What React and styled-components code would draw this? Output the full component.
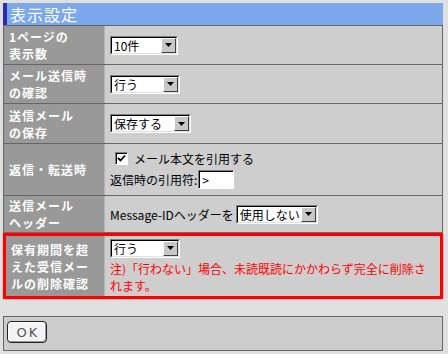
import React from 'react';
import styled, { createGlobalStyle } from 'styled-components';

const GlobalStyle = createGlobalStyle`
  html, body {
    margin: 0;
    padding: 0;
    background: #e0e0e0;
  }
  body {
    font-family: "Noto Sans CJK JP", "DejaVu Sans", sans-serif;
    font-size: 12px;
    color: #000;
  }
  * { box-sizing: border-box; }
`;

const Page = styled.div`
  width: 446px;
  padding: 3px;
`;

const Title = styled.div`
  height: 22px;
  background: #7ba7eb;
  border-left: 4px solid #2b2bb8;
  color: #fff;
  font-size: 16px;
  line-height: 22px;
  letter-spacing: 1px;
  padding-left: 3px;
`;

const Row = styled.div`
  display: grid;
  grid-template-columns: ${p => (p.$alert ? '98px' : '100px')} 1fr;
  height: ${p => p.$h}px;
  border: 1px solid #666;
  border-top-width: ${p => (p.$first ? 1 : 0)}px;
  ${p => p.$alert && `
    border: 3px solid #ff0000;
    box-shadow: 0 0 1px #ff6060;
  `}
`;

const Label = styled.div`
  background: #999;
  color: #fff;
  font-weight: bold;
  font-size: 12px;
  line-height: 17px;
  letter-spacing: 1px;
  padding: 0 4px 0 5px;
  display: flex;
  align-items: center;
`;

const Value = styled.div`
  background: #cecece;
  border-left: 1px solid #b4b4b4;
  padding: 0 4px 0 5px;
  display: flex;
  flex-direction: column;
  justify-content: center;
  align-items: flex-start;
  gap: ${p => p.$gap || 0}px;
`;

const Line = styled.div`
  display: flex;
  align-items: center;
  white-space: nowrap;
`;

const SelectBox = styled.span`
  display: inline-flex;
  width: ${p => p.$w}px;
  height: 19px;
  border: 1px solid;
  border-color: #808080 #fff #fff #808080;
  margin-left: ${p => p.$ml || 0}px;
`;

const SelectInner = styled.span`
  flex: 1;
  display: flex;
  border: 1px solid;
  border-color: #000 #dfdfdf #dfdfdf #000;
  background: #fff;
`;

const SelectText = styled.span`
  flex: 1;
  padding-left: 2px;
  font-size: 12px;
  line-height: 15px;
  white-space: nowrap;
`;

const ArrowBtn = styled.span`
  width: 15px;
  background: #c8c8c8;
  border: 1px solid;
  border-color: #fff #404040 #404040 #fff;
  display: flex;
  align-items: center;
  justify-content: center;
`;

const Check = styled.span`
  width: 13px;
  height: 13px;
  border: 1px solid;
  border-color: #808080 #fff #fff #808080;
  background: #fff;
  box-shadow: inset 1px 1px 0 #000;
  display: inline-flex;
  align-items: center;
  justify-content: center;
  margin: 0 6px 0 5px;
`;

const TextBox = styled.span`
  display: inline-flex;
  align-items: center;
  width: 36px;
  height: 19px;
  margin-left: 1px;
  border: 1px solid;
  border-color: #808080 #fff #fff #808080;
  background: #fff;
  box-shadow: inset 1px 1px 0 #000;
  padding-left: 3px;
  font-size: 12px;
`;

const Note = styled.div`
  color: #ff0000;
  font-size: 12px;
  line-height: 17px;
  margin-top: 2px;
`;

const Footer = styled.div`
  margin-top: 17px;
  height: 35px;
  border: 1px solid #666;
  background: #cccccc;
  padding: 4px 3px;
`;

const OkButton = styled.button`
  width: 40px;
  height: 22px;
  border: 1px solid #222;
  border-radius: 4px;
  background: #f4f4f4;
  box-shadow: inset -1px -1px 0 #9a9a9a, inset 1px 1px 0 #fff;
  font-family: "DejaVu Sans", sans-serif;
  font-size: 13px;
  letter-spacing: 2px;
  color: #555;
  padding: 0 0 0 2px;
`;

const Select = ({ w, ml, children }) => (
  <SelectBox $w={w} $ml={ml}>
    <SelectInner>
      <SelectText>{children}</SelectText>
      <ArrowBtn>
        <svg width="7" height="4" viewBox="0 0 7 4">
          <path d="M0 0h7L3.5 4z" fill="#000" />
        </svg>
      </ArrowBtn>
    </SelectInner>
  </SelectBox>
);

export default function App() {
  return (
    <>
      <GlobalStyle />
      <Page>
        <Title>表示設定</Title>
        <Row $h={40} $first>
          <Label>1ページの<br />表示数</Label>
          <Value><Select w={68}>10件</Select></Value>
        </Row>
        <Row $h={39}>
          <Label>メール送信時<br />の確認</Label>
          <Value><Select w={70}>行う</Select></Value>
        </Row>
        <Row $h={40}>
          <Label>送信メール<br />の保存</Label>
          <Value><Select w={81}>保存する</Select></Value>
        </Row>
        <Row $h={52}>
          <Label>返信・転送時</Label>
          <Value $gap={3}>
            <Line>
              <Check>
                <svg width="9" height="9" viewBox="0 0 9 9">
                  <path d="M1 4l2.5 2.5L8 1.5" stroke="#000" strokeWidth="1.8" fill="none" />
                </svg>
              </Check>
              メール本文を引用する
            </Line>
            <Line>
              返信時の引用符:
              <TextBox>&gt;</TextBox>
            </Line>
          </Value>
        </Row>
        <Row $h={37}>
          <Label>送信メール<br />ヘッダー</Label>
          <Value>
            <Line>
              Message-IDヘッダーを
              <Select w={82} ml={2}>使用しない</Select>
            </Line>
          </Value>
        </Row>
        <Row $h={66} $alert>
          <Label>保有期間を超<br />えた受信メー<br />ルの削除確認</Label>
          <Value>
            <Select w={70}>行う</Select>
            <Note>注)「行わない」場合、未読既読にかかわらず完全に削除されます。</Note>
          </Value>
        </Row>
        <Footer>
          <OkButton>OK</OkButton>
        </Footer>
      </Page>
    </>
  );
}
